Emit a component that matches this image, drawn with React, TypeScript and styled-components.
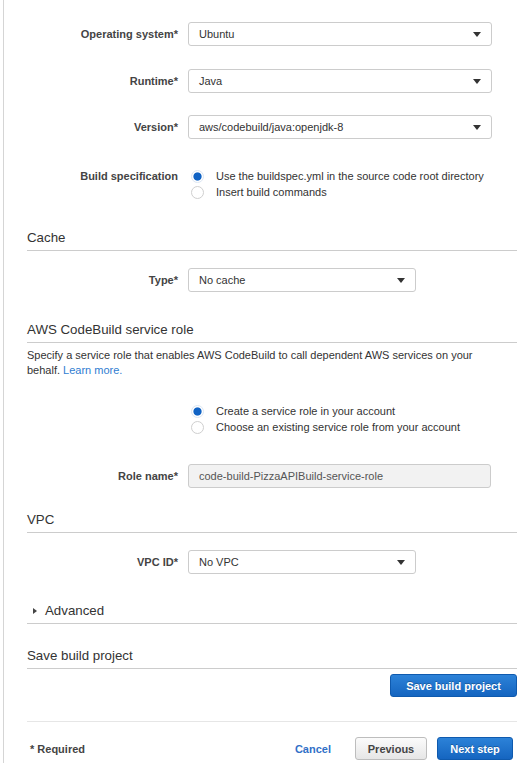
import styled, { createGlobalStyle } from "styled-components";

const GlobalStyle = createGlobalStyle`
  html, body {
    margin: 0;
    padding: 0;
    background: #ffffff;
    font-family: "Liberation Sans", Arial, sans-serif;
    color: #333333;
  }
`;

const Page = styled.div`
  margin-left: 3px;
  margin-right: 14px;
  border-left: 1px solid #d5d5d5;
  padding-left: 23px;
  padding-bottom: 3px;
`;

const Row = styled.div<{ top: number }>`
  display: flex;
  align-items: flex-start;
  margin-top: ${(props) => props.top}px;
`;

const Label = styled.div<{ radio?: boolean }>`
  width: 151px;
  flex: none;
  text-align: right;
  font-size: 11px;
  font-weight: bold;
  color: #444444;
  line-height: ${(props) => (props.radio ? "16px" : "24px")};
  padding-right: 10px;
`;

const SelectBox = styled.div<{ width: number }>`
  position: relative;
  box-sizing: border-box;
  width: ${(props) => props.width}px;
  height: 24px;
  border: 1px solid #cccccc;
  border-radius: 3px;
  background: #ffffff;
  font-size: 11px;
  color: #333333;
  line-height: 22px;
  padding-left: 10px;
`;

const Arrow = styled.span`
  position: absolute;
  right: 10px;
  top: 9px;
  width: 0;
  height: 0;
  border-left: 4px solid transparent;
  border-right: 4px solid transparent;
  border-top: 5px solid #333333;
`;

const TextInput = styled.div`
  box-sizing: border-box;
  width: 303px;
  height: 24px;
  border: 1px solid #cccccc;
  border-radius: 3px;
  background: #f2f2f2;
  font-size: 11px;
  color: #555555;
  line-height: 22px;
  padding-left: 10px;
`;

const RadioList = styled.div`
  display: flex;
  flex-direction: column;
`;

const RadioItem = styled.div`
  display: flex;
  align-items: center;
  height: 16px;
  font-size: 11px;
  color: #333333;
  gap: 12px;
  padding-left: 3px;
`;

const RadioCircle = styled.span<{ checked?: boolean }>`
  box-sizing: border-box;
  width: 13px;
  height: 13px;
  border-radius: 50%;
  flex: none;
  border: 1px solid ${(props) => (props.checked ? "#dce6f2" : "#cfcfcf")};
  background: ${(props) =>
    props.checked
      ? "radial-gradient(circle, #0f62c4 0, #0f62c4 3.6px, #ffffff 4.6px)"
      : "#ffffff"};
`;

const SectionTitle = styled.div<{ top: number }>`
  margin-top: ${(props) => props.top}px;
  font-size: 13.3px;
  line-height: 18px;
  color: #333333;
  padding-bottom: 3px;
  border-bottom: 1px solid #cccccc;
  display: flex;
  align-items: center;
  gap: 8px;
`;

const Caret = styled.span`
  width: 0;
  height: 0;
  margin-left: 6px;
  border-top: 3px solid transparent;
  border-bottom: 3px solid transparent;
  border-left: 4px solid #444444;
`;

const Description = styled.p`
  margin: 5px 0 0;
  font-size: 11px;
  line-height: 15px;
  color: #333333;
  padding-right: 30px;
`;

const LearnMore = styled.span`
  color: #2f7dd1;
  cursor: pointer;
`;

const ButtonRow = styled.div`
  display: flex;
  justify-content: flex-end;
  margin-top: 5px;
`;

const Button = styled.button<{ primary?: boolean; width: number }>`
  box-sizing: border-box;
  width: ${(props) => props.width}px;
  height: 23px;
  border-radius: 3px;
  font-family: "Liberation Sans", Arial, sans-serif;
  font-size: 11px;
  font-weight: bold;
  padding: 0;
  cursor: pointer;
  color: ${(props) => (props.primary ? "#ffffff" : "#444444")};
  border: 1px solid ${(props) => (props.primary ? "#0f5aae" : "#bdbdbd")};
  background: ${(props) =>
    props.primary
      ? "linear-gradient(#2c82d8, #1565c0)"
      : "linear-gradient(#fbfbfb, #e6e6e6)"};
  text-shadow: ${(props) =>
    props.primary ? "0 -1px 0 rgba(0, 0, 0, 0.25)" : "none"};
`;

const Footer = styled.div`
  margin-top: 24px;
  border-top: 1px solid #e6e6e6;
  padding-top: 15px;
  display: flex;
  align-items: center;
`;

const Required = styled.div`
  flex: 1;
  font-size: 11px;
  font-weight: bold;
  color: #444444;
  padding-left: 3px;
`;

const CancelLink = styled.span`
  font-size: 11px;
  font-weight: bold;
  color: #3170c7;
  margin-right: 24px;
  cursor: pointer;
`;

const FooterButtons = styled.div`
  display: flex;
  gap: 10px;
  margin-right: 4px;
`;

const FirstRows = styled.div`
  padding-top: 22px;
`;

const Select = ({ value, width }: { value: string; width: number }) => (
  <SelectBox width={width}>
    {value}
    <Arrow />
  </SelectBox>
);

const Radio = ({ checked, text }: { checked?: boolean; text: string }) => (
  <RadioItem>
    <RadioCircle checked={checked} />
    {text}
  </RadioItem>
);

const App = () => {
  return (
    <>
      <GlobalStyle />
      <Page>
        <FirstRows>
          <Row top={0}>
            <Label>Operating system*</Label>
            <Select value="Ubuntu" width={304} />
          </Row>
          <Row top={23}>
            <Label>Runtime*</Label>
            <Select value="Java" width={304} />
          </Row>
          <Row top={22}>
            <Label>Version*</Label>
            <Select value="aws/codebuild/java:openjdk-8" width={304} />
          </Row>
          <Row top={29}>
            <Label radio>Build specification</Label>
            <RadioList>
              <Radio checked text="Use the buildspec.yml in the source code root directory" />
              <Radio text="Insert build commands" />
            </RadioList>
          </Row>
        </FirstRows>

        <SectionTitle top={29}>Cache</SectionTitle>
        <Row top={17}>
          <Label>Type*</Label>
          <Select value="No cache" width={228} />
        </Row>

        <SectionTitle top={29}>AWS CodeBuild service role</SectionTitle>
        <Description>
          Specify a service role that enables AWS CodeBuild to call dependent
          AWS services on your behalf. <LearnMore>Learn more.</LearnMore>
        </Description>
        <Row top={25}>
          <Label radio />
          <RadioList>
            <Radio checked text="Create a service role in your account" />
            <Radio text="Choose an existing service role from your account" />
          </RadioList>
        </Row>
        <Row top={29}>
          <Label>Role name*</Label>
          <TextInput>code-build-PizzaAPIBuild-service-role</TextInput>
        </Row>

        <SectionTitle top={23}>VPC</SectionTitle>
        <Row top={17}>
          <Label>VPC ID*</Label>
          <Select value="No VPC" width={228} />
        </Row>

        <SectionTitle top={28}>
          <Caret />
          Advanced
        </SectionTitle>

        <SectionTitle top={23}>Save build project</SectionTitle>
        <ButtonRow>
          <Button primary width={127}>
            Save build project
          </Button>
        </ButtonRow>

        <Footer>
          <Required>* Required</Required>
          <CancelLink>Cancel</CancelLink>
          <FooterButtons>
            <Button width={72}>Previous</Button>
            <Button primary width={76}>
              Next step
            </Button>
          </FooterButtons>
        </Footer>
      </Page>
    </>
  );
};

export default App;
